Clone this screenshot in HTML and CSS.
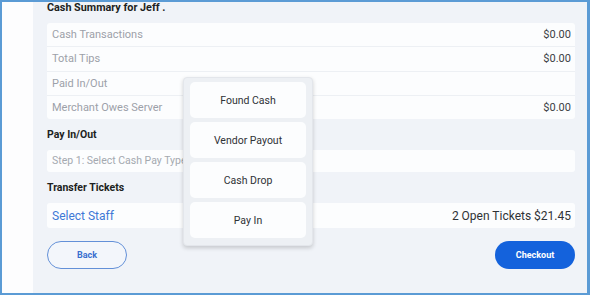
FILE: index.html
```html
<!DOCTYPE html>
<html>
<head>
<meta charset="utf-8">
<link rel="stylesheet" href="styles.css">
</head>
<body>
<div class="frame">
  <div class="strip"></div>
  <div class="panel">
    <div class="title">Cash Summary for Jeff .</div>
    <div class="card">
      <div class="row"><span class="label">Cash Transactions</span><span class="value">$0.00</span></div>
      <div class="row"><span class="label">Total Tips</span><span class="value">$0.00</span></div>
      <div class="row"><span class="label">Paid In/Out</span><span class="value"></span></div>
      <div class="row"><span class="label">Merchant Owes Server</span><span class="value">$0.00</span></div>
    </div>
    <div class="section">Pay In/Out</div>
    <div class="input">Step 1: Select Cash Pay Type...</div>
    <div class="section">Transfer Tickets</div>
    <div class="staff"><span class="staff-link">Select Staff</span><span class="staff-info">2 Open Tickets $21.45</span></div>
    <div class="actions">
      <button class="btn btn-back">Back</button>
      <button class="btn btn-checkout">Checkout</button>
    </div>
  </div>
  <div class="menu">
    <div class="menu-item">Found Cash</div>
    <div class="menu-item">Vendor Payout</div>
    <div class="menu-item">Cash Drop</div>
    <div class="menu-item">Pay In</div>
  </div>
</div>
</body>
</html>
```
FILE: styles.css
```css
* { box-sizing: border-box; }
html, body { margin: 0; padding: 0; }
body {
  width: 590px;
  height: 295px;
  font-family: Roboto, "Liberation Sans", sans-serif;
  overflow: hidden;
}
.frame {
  position: relative;
  width: 590px;
  height: 295px;
  border-style: solid;
  border-color: #5b9bd5;
  border-width: 2px 3px 2px 2px;
  display: flex;
}
.strip {
  width: 31px;
  background: #fdfdfe;
}
.panel {
  flex: 1;
  background: #f0f3f8;
  padding: 0 12px 0 14px;
  display: flex;
  flex-direction: column;
}
.title {
  height: 21px;
  line-height: 12px;
  font-size: 10.8px;
  font-weight: 700;
  color: #1d1f22;
}
.card {
  background: #edf0f4;
  border-radius: 3px;
  display: flex;
  flex-direction: column;
  gap: 1px;
  overflow: hidden;
}
.row {
  height: 23.25px;
  background: #fcfdfe;
  display: flex;
  justify-content: space-between;
  align-items: center;
  padding: 0 4px 0 5px;
  font-size: 11px;
}
.label { color: #9ca1a9; }
.value { color: #3c3f44; }
.section {
  height: 31px;
  line-height: 31px;
  font-size: 10.5px;
  font-weight: 700;
  color: #1d1f22;
}
.input {
  height: 22px;
  line-height: 22px;
  background: #fcfdfe;
  border-radius: 3px;
  padding-left: 5px;
  font-size: 10.5px;
  color: #a4a9b0;
}
.staff {
  height: 25px;
  background: #fcfdfe;
  border-radius: 3px;
  display: flex;
  justify-content: space-between;
  align-items: center;
  padding: 0 4px 0 5px;
}
.staff-link { color: #3e78d6; font-size: 12px; }
.staff-info { color: #2f3236; font-size: 12px; }
.actions {
  margin-top: 13px;
  display: flex;
  justify-content: space-between;
}
.btn {
  width: 80px;
  height: 28px;
  border-radius: 14px;
  font-family: Roboto, "Liberation Sans", sans-serif;
  font-size: 9px;
  font-weight: 700;
  padding: 0;
}
.btn-back {
  background: #f3f6fb;
  border: 1px solid #6390d8;
  color: #3a6fcf;
}
.btn-checkout {
  background: #1462dc;
  border: none;
  color: #ffffff;
}
.menu {
  position: absolute;
  left: 181px;
  top: 75px;
  width: 130px;
  height: 169px;
  background: #edf0f4;
  border: 1px solid #e3e6eb;
  border-radius: 4px;
  box-shadow: 0 2px 4px rgba(0, 0, 0, 0.18);
  padding: 4px 6px 0 6px;
  display: flex;
  flex-direction: column;
  gap: 4px;
}
.menu-item {
  height: 36px;
  background: #fcfdfe;
  border-radius: 5px;
  display: flex;
  align-items: center;
  justify-content: center;
  font-size: 10.5px;
  color: #2f3236;
}
```
